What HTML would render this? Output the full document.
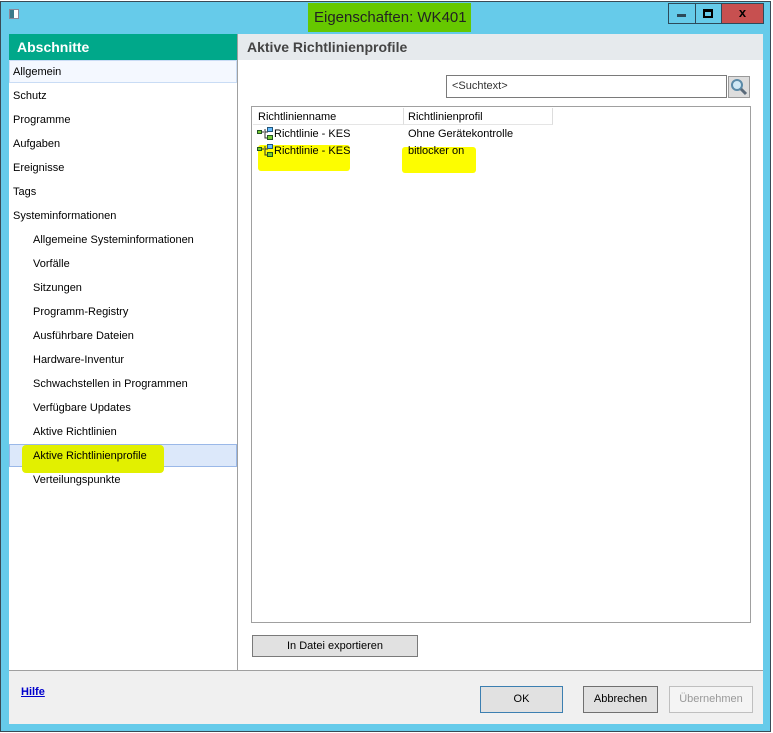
<!DOCTYPE html>
<html><head><meta charset="utf-8"><style>
*{margin:0;padding:0;box-sizing:border-box}
body{width:773px;height:733px;background:#fff;position:relative;overflow:hidden;font-family:"Liberation Sans",sans-serif;font-size:11px;color:#000}
.a{position:absolute}
.t{position:absolute;white-space:nowrap;line-height:14px}
.btn{position:absolute;background:#e1e1e1;border:1px solid #7a7a7a;text-align:center;line-height:20px;font-size:11px}
</style></head><body>
<div class="a" style="left:0;top:1px;width:771px;height:731px;background:#66cbea;border:1px solid #3a4a55"></div>
<div class="a" style="left:9px;top:9px;width:10px;height:10px;background:#fff;border:1px solid #889"></div>
<div class="a" style="left:10px;top:10px;width:4px;height:8px;background:#3a7a8a"></div>
<div class="a" style="left:308px;top:3px;width:163px;height:29px;background:#66c800"></div>
<div class="t" style="left:314px;top:9px;font-size:15px;line-height:18px;color:#222">Eigenschaften: WK401</div>
<div class="a" style="left:668px;top:3px;width:28px;height:21px;border:1px solid #2d4a5a;background:#66cbea"></div>
<div class="a" style="left:677px;top:14px;width:9px;height:3px;background:#2d4a5a"></div>
<div class="a" style="left:695px;top:3px;width:27px;height:21px;border:1px solid #2d4a5a;background:#66cbea"></div>
<div class="a" style="left:703px;top:9px;width:10px;height:9px;border:2px solid #000;border-top-width:3px"></div>
<div class="a" style="left:721px;top:3px;width:43px;height:21px;background:#c75050;border:1px solid #2d4a5a;color:#000;font-weight:bold;font-size:13px;text-align:center;line-height:18px">x</div>
<div class="a" style="left:9px;top:34px;width:754px;height:690px;background:#f0f0f0"></div>
<div class="a" style="left:9px;top:34px;width:228px;height:636px;background:#fff"></div>
<div class="a" style="left:9px;top:34px;width:228px;height:26px;background:#00a88a"></div>
<div class="t" style="left:17px;top:38px;font-size:14px;line-height:18px;color:#fff;font-weight:bold">Abschnitte</div>
<div class="a" style="left:9px;top:60px;width:228px;height:23px;background:#f4f8ff;border:1px solid #c9dcf5"></div>
<div class="a" style="left:9px;top:444px;width:228px;height:23px;background:#dce8fa;border:1px solid #9ab8e8"></div>
<div class="a" style="left:22px;top:445px;width:142px;height:28px;background:#e2f000;border-radius:4px"></div>
<div class="a" style="left:237px;top:34px;width:1px;height:636px;background:#a0a0a0"></div>
<div class="t" style="left:13px;top:65px">Allgemein</div>
<div class="t" style="left:13px;top:89px">Schutz</div>
<div class="t" style="left:13px;top:113px">Programme</div>
<div class="t" style="left:13px;top:137px">Aufgaben</div>
<div class="t" style="left:13px;top:161px">Ereignisse</div>
<div class="t" style="left:13px;top:185px">Tags</div>
<div class="t" style="left:13px;top:209px">Systeminformationen</div>
<div class="t" style="left:33px;top:233px">Allgemeine Systeminformationen</div>
<div class="t" style="left:33px;top:257px">Vorfälle</div>
<div class="t" style="left:33px;top:281px">Sitzungen</div>
<div class="t" style="left:33px;top:305px">Programm-Registry</div>
<div class="t" style="left:33px;top:329px">Ausführbare Dateien</div>
<div class="t" style="left:33px;top:353px">Hardware-Inventur</div>
<div class="t" style="left:33px;top:377px">Schwachstellen in Programmen</div>
<div class="t" style="left:33px;top:401px">Verfügbare Updates</div>
<div class="t" style="left:33px;top:425px">Aktive Richtlinien</div>
<div class="t" style="left:33px;top:449px">Aktive Richtlinienprofile</div>
<div class="t" style="left:33px;top:473px">Verteilungspunkte</div>
<div class="a" style="left:238px;top:34px;width:525px;height:636px;background:#fff"></div>
<div class="a" style="left:238px;top:34px;width:525px;height:26px;background:#e6eaed"></div>
<div class="t" style="left:247px;top:38px;font-size:14px;line-height:18px;color:#444;font-weight:bold">Aktive Richtlinienprofile</div>
<div class="a" style="left:446px;top:75px;width:281px;height:23px;border:1px solid #7a7a7a;background:#fff"></div>
<div class="t" style="left:452px;top:79px;color:#333">&lt;Suchtext&gt;</div>
<div class="a" style="left:728px;top:76px;width:22px;height:22px;border:1px solid #999;background:#ddd"></div>
<svg class="a" style="left:730px;top:78px" width="18" height="18"><circle cx="7" cy="7" r="5" fill="#cfe8f5" stroke="#5a8aa8" stroke-width="2"/><path d="M11 11l5 5" stroke="#5a6a7a" stroke-width="3"/></svg>
<div class="a" style="left:251px;top:106px;width:500px;height:517px;border:1px solid #a0a0a0"></div>
<div class="a" style="left:253px;top:108px;width:151px;height:17px;border-right:1px solid #ddd;border-bottom:1px solid #e5e5e5"></div>
<div class="a" style="left:404px;top:108px;width:149px;height:17px;border-right:1px solid #ddd;border-bottom:1px solid #e5e5e5"></div>
<div class="t" style="left:258px;top:110px">Richtlinienname</div>
<div class="t" style="left:408px;top:110px">Richtlinienprofil</div>
<div class="a" style="left:258px;top:145px;width:92px;height:26px;background:#fdfd00;border-radius:3px"></div>
<div class="a" style="left:402px;top:147px;width:74px;height:26px;background:#fdfd00;border-radius:3px"></div>
<svg class="a" style="left:257px;top:126px" width="17" height="16"><path d="M4 6h3M8 3v9h3M8 6h3" stroke="#333" fill="none"/><rect x="0.5" y="4.5" width="4" height="3" fill="#7c3" stroke="#252"/><rect x="10.5" y="1.5" width="5" height="4" fill="#6bf" stroke="#257"/><rect x="10.5" y="9.5" width="5" height="4" fill="#7c3" stroke="#252"/></svg>
<svg class="a" style="left:257px;top:143px" width="17" height="16"><path d="M4 6h3M8 3v9h3M8 6h3" stroke="#333" fill="none"/><rect x="0.5" y="4.5" width="4" height="3" fill="#7c3" stroke="#252"/><rect x="10.5" y="1.5" width="5" height="4" fill="#6bf" stroke="#257"/><rect x="10.5" y="9.5" width="5" height="4" fill="#7c3" stroke="#252"/></svg>
<div class="t" style="left:274px;top:127px">Richtlinie - KES</div>
<div class="t" style="left:408px;top:127px">Ohne Gerätekontrolle</div>
<div class="t" style="left:274px;top:144px">Richtlinie - KES</div>
<div class="t" style="left:408px;top:144px">bitlocker on</div>
<div class="btn" style="left:252px;top:635px;width:166px;height:22px">In Datei exportieren</div>
<div class="a" style="left:9px;top:670px;width:754px;height:1px;background:#a0a0a0"></div>
<div class="t" style="left:21px;top:685px;color:#00c;text-decoration:underline;font-weight:bold">Hilfe</div>
<div class="btn" style="left:480px;top:686px;width:83px;height:27px;line-height:25px;border-color:#3c7fb1">OK</div>
<div class="btn" style="left:583px;top:686px;width:75px;height:27px;line-height:25px;border-color:#707070">Abbrechen</div>
<div class="btn" style="left:669px;top:686px;width:84px;height:27px;line-height:25px;border-color:#bfbfbf;background:#f4f4f4;color:#999">Übernehmen</div>
</body></html>
